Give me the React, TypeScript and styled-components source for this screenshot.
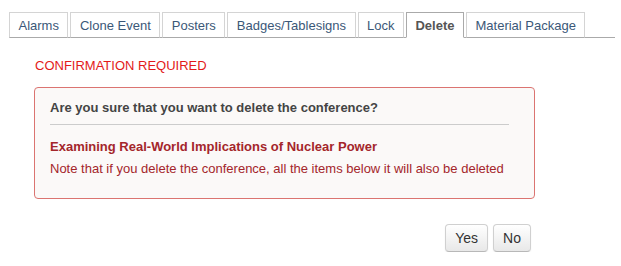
import React from "react";
import styled, { createGlobalStyle } from "styled-components";

const tabs = [
  "Alarms",
  "Clone Event",
  "Posters",
  "Badges/Tablesigns",
  "Lock",
  "Delete",
  "Material Package",
];

const GlobalStyle = createGlobalStyle`
  body {
    margin: 0;
    background: #fff;
    font-family: "Liberation Sans", Arial, sans-serif;
    font-size: 13px;
    line-height: 15px;
  }
`;

export default function App() {
  return (
    <Page>
      <GlobalStyle />
      <TabBar>
        {tabs.map((t) => (
          <Tab key={t} $active={t === "Delete"}>
            {t}
          </Tab>
        ))}
      </TabBar>
      <Section>
        <Heading>CONFIRMATION REQUIRED</Heading>
        <Alert>
          <Question>Are you sure that you want to delete the conference?</Question>
          <Rule />
          <Title>Examining Real-World Implications of Nuclear Power</Title>
          <Note>
            Note that if you delete the conference, all the items below it will
            also be deleted
          </Note>
        </Alert>
        <Actions>
          <Button>Yes</Button>
          <Button>No</Button>
        </Actions>
      </Section>
    </Page>
  );
}

const Page = styled.div`
  padding: 12px 6px 0 9px;
`;

const TabBar = styled.div`
  display: flex;
  gap: 2px;
  border-bottom: 1px solid #aaa;
  height: 25px;
`;

interface TabProps {
  $active?: boolean;
}

const Tab = styled.div<TabProps>`
  box-sizing: border-box;
  height: 26px;
  padding: 0 8.5px;
  display: flex;
  align-items: center;
  background: #fff;
  border: 1px solid ${({ $active }) => ($active ? "#aaa" : "#d4d4d4")};
  border-bottom-color: ${({ $active }) => ($active ? "#fff" : "#aaa")};
  color: ${({ $active }) => ($active ? "#555" : "#3b5878")};
  font-weight: ${({ $active }) => ($active ? "bold" : "normal")};
  white-space: nowrap;
`;

const Section = styled.div`
  padding-left: 25px;
`;

const Heading = styled.div`
  margin: 20px 0 0 1px;
  color: #e31a1a;
`;

const Alert = styled.div`
  box-sizing: border-box;
  width: 501px;
  margin-top: 14px;
  padding: 12px 25px 22px 15px;
  background: #fbf9f8;
  border: 1px solid #db7471;
  border-radius: 4px;
`;

const Question = styled.div`
  font-weight: bold;
  color: #444;
`;

const Rule = styled.div`
  height: 1px;
  background: #ccc;
  margin: 9px 0 14px;
`;

const Title = styled.div`
  font-weight: bold;
  color: #a4262b;
`;

const Note = styled.div`
  margin-top: 7px;
  color: #a4262b;
`;

const Actions = styled.div`
  width: 497px;
  margin-top: 25px;
  display: flex;
  justify-content: flex-end;
  gap: 5px;
`;

const Button = styled.button`
  box-sizing: border-box;
  height: 28px;
  padding: 0 9px;
  font-family: "Liberation Sans", Arial, sans-serif;
  font-size: 14px;
  line-height: 20px;
  color: #333;
  background: linear-gradient(#ffffff, #e8e8e8);
  border: 1px solid #d0d0d0;
  border-bottom-color: #b8b8b8;
  border-radius: 4px;
  box-shadow: inset 0 1px 0 rgba(255, 255, 255, 0.2), 0 1px 2px rgba(0, 0, 0, 0.05);
`;
